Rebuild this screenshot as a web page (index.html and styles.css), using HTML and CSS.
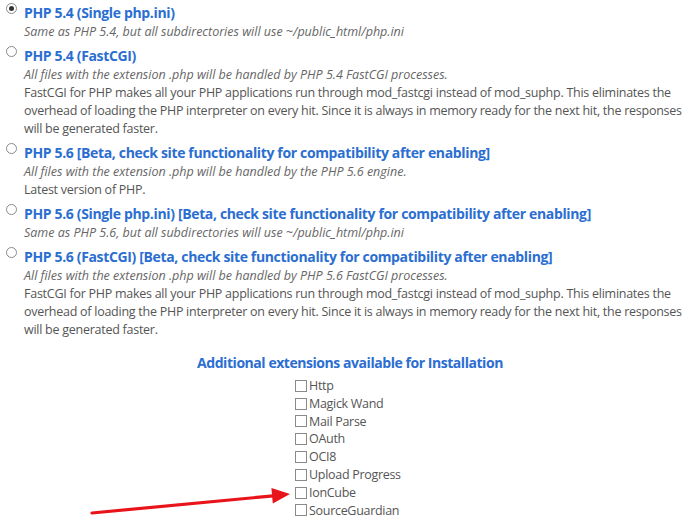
FILE: index.html
```html
<!DOCTYPE html>
<html>
<head>
<meta charset="utf-8">
<link rel="stylesheet" href="styles.css">
</head>
<body>
<div class="page">
  <div class="options">
    <div class="option">
      <span class="radio checked"></span>
      <div class="body">
        <div class="title">PHP 5.4 (Single php.ini)</div>
        <div class="note">Same as PHP 5.4, but all subdirectories will use ~/public_html/php.ini</div>
      </div>
    </div>
    <div class="option">
      <span class="radio"></span>
      <div class="body">
        <div class="title">PHP 5.4 (FastCGI)</div>
        <div class="note">All files with the extension .php will be handled by PHP 5.4 FastCGI processes.</div>
        <div class="text">FastCGI for PHP makes all your PHP applications run through mod_fastcgi instead of mod_suphp. This eliminates the overhead of loading the PHP interpreter on every hit. Since it is always in memory ready for the next hit, the responses will be generated faster.</div>
      </div>
    </div>
    <div class="option">
      <span class="radio"></span>
      <div class="body">
        <div class="title">PHP 5.6 [Beta, check site functionality for compatibility after enabling]</div>
        <div class="note">All files with the extension .php will be handled by the PHP 5.6 engine.</div>
        <div class="text">Latest version of PHP.</div>
      </div>
    </div>
    <div class="option">
      <span class="radio"></span>
      <div class="body">
        <div class="title">PHP 5.6 (Single php.ini) [Beta, check site functionality for compatibility after enabling]</div>
        <div class="note">Same as PHP 5.6, but all subdirectories will use ~/public_html/php.ini</div>
      </div>
    </div>
    <div class="option">
      <span class="radio"></span>
      <div class="body">
        <div class="title">PHP 5.6 (FastCGI) [Beta, check site functionality for compatibility after enabling]</div>
        <div class="note">All files with the extension .php will be handled by PHP 5.6 FastCGI processes.</div>
        <div class="text">FastCGI for PHP makes all your PHP applications run through mod_fastcgi instead of mod_suphp. This eliminates the overhead of loading the PHP interpreter on every hit. Since it is always in memory ready for the next hit, the responses will be generated faster.</div>
      </div>
    </div>
  </div>
  <h3 class="ext-heading">Additional extensions available for Installation</h3>
  <ul class="ext-list">
    <li><span class="box"></span>Http</li>
    <li><span class="box"></span>Magick Wand</li>
    <li><span class="box"></span>Mail Parse</li>
    <li><span class="box"></span>OAuth</li>
    <li><span class="box"></span>OCI8</li>
    <li><span class="box"></span>Upload Progress</li>
    <li><span class="box"></span>IonCube</li>
    <li><span class="box"></span>SourceGuardian</li>
  </ul>
  <svg class="arrow" width="206" height="36" viewBox="0 0 206 36">
    <line x1="4" y1="31" x2="188" y2="13.6" stroke="#e8141a" stroke-width="3.2" stroke-linecap="round"/>
    <polygon points="202,12 183.4,6 184.8,21.4" fill="#e8141a"/>
  </svg>
</div>
</body>
</html>
```

FILE: styles.css
```css
html, body {
  margin: 0;
  padding: 0;
  background: #ffffff;
}
.page {
  position: relative;
  width: 700px;
  height: 526px;
  overflow: hidden;
  font-family: "Open Sans", "Noto Sans", sans-serif;
  color: #555555;
}
.options {
  display: flex;
  flex-direction: column;
  gap: 4px;
  padding: 2px 0 0 6px;
}
.option {
  display: flex;
  align-items: flex-start;
}
.radio {
  flex: none;
  width: 9px;
  height: 9px;
  border: 1px solid #8a8a8a;
  border-radius: 50%;
  margin: 1px 7px 0 0;
  background: #fff;
  position: relative;
}
.radio.checked::after {
  content: "";
  position: absolute;
  left: 2px;
  top: 2px;
  width: 5px;
  height: 5px;
  border-radius: 50%;
  background: #333;
}
.body {
  width: 662px;
}
.title {
  font-size: 14px;
  font-weight: 700;
  letter-spacing: -0.35px;
  color: #2b6ed1;
  line-height: 20px;
  margin-top: 1px;
}
.note {
  font-size: 12.5px;
  font-style: italic;
  color: #666666;
  line-height: 18px;
}
.text {
  font-size: 12.5px;
  letter-spacing: -0.26px;
  color: #555555;
  line-height: 18px;
}
.ext-heading {
  margin: 14px 0 4px 0;
  text-align: center;
  font-size: 14px;
  font-weight: 700;
  letter-spacing: -0.45px;
  color: #2b6ed1;
  line-height: 20px;
}
.ext-list {
  list-style: none;
  margin: 0;
  padding: 0 0 0 295px;
}
.ext-list li {
  display: flex;
  align-items: center;
  font-size: 12.5px;
  letter-spacing: -0.3px;
  line-height: 17.8px;
  color: #555555;
}
.box {
  flex: none;
  width: 10px;
  height: 10px;
  border: 1px solid #8a8a8a;
  margin-right: 2px;
  background: #fff;
}
.arrow {
  position: absolute;
  left: 88px;
  top: 482px;
}
```
